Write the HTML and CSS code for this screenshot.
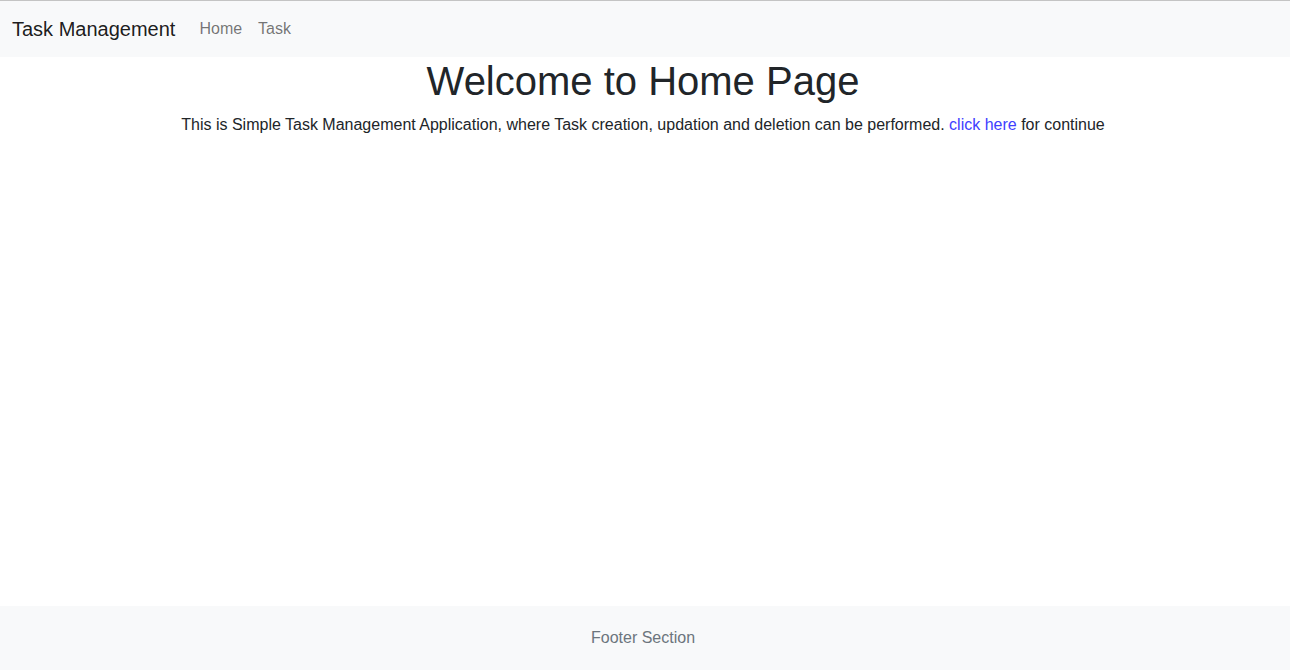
FILE: index.html
```html
<!DOCTYPE html>
<html lang="en">
<head>
<meta charset="utf-8">
<title>Task Management</title>
<link rel="stylesheet" href="styles.css">
</head>
<body>
<div class="page">
  <nav class="navbar">
    <a class="brand" href="#">Task Management</a>
    <ul class="nav">
      <li><a class="nav-link" href="#">Home</a></li>
      <li><a class="nav-link" href="#">Task</a></li>
    </ul>
  </nav>
  <main class="main">
    <h1 class="title">Welcome to Home Page</h1>
    <p class="lead">This is Simple Task Management Application, where Task creation, updation and deletion can be performed. <a class="link" href="#">click here</a> for continue</p>
  </main>
  <footer class="footer">Footer Section</footer>
</div>
</body>
</html>
```
FILE: styles.css
```css
* { box-sizing: border-box; }
html, body { margin: 0; padding: 0; }
body {
  font-family: "Liberation Sans", Arial, sans-serif;
  font-size: 16px;
  line-height: 1.5;
  color: #212529;
  background: #fff;
}
.page {
  display: flex;
  flex-direction: column;
  min-height: 100vh;
}
.navbar {
  display: flex;
  align-items: center;
  background: #f8f9fa;
  border-top: 1px solid #c4c4c4;
  padding: 8px 12px;
}
.brand {
  font-size: 20px;
  line-height: 30px;
  padding: 5px 0;
  margin-right: 16px;
  color: rgba(0,0,0,.9);
  text-decoration: none;
}
.nav {
  display: flex;
  list-style: none;
  margin: 0;
  padding: 0;
}
.nav-link {
  display: block;
  padding: 8px;
  color: rgba(0,0,0,.55);
  text-decoration: none;
}
.main {
  flex: 1;
  text-align: center;
  padding-right: 4px;
}
.title {
  margin: 0 0 8px;
  font-size: 40px;
  font-weight: 500;
  line-height: 1.2;
}
.lead {
  margin: 0;
}
.link {
  color: #4040ff;
  text-decoration: none;
}
.footer {
  background: #f8f9fa;
  color: #6c757d;
  text-align: center;
  padding: 20px 4px 20px 0;
  line-height: 24px;
}
```
